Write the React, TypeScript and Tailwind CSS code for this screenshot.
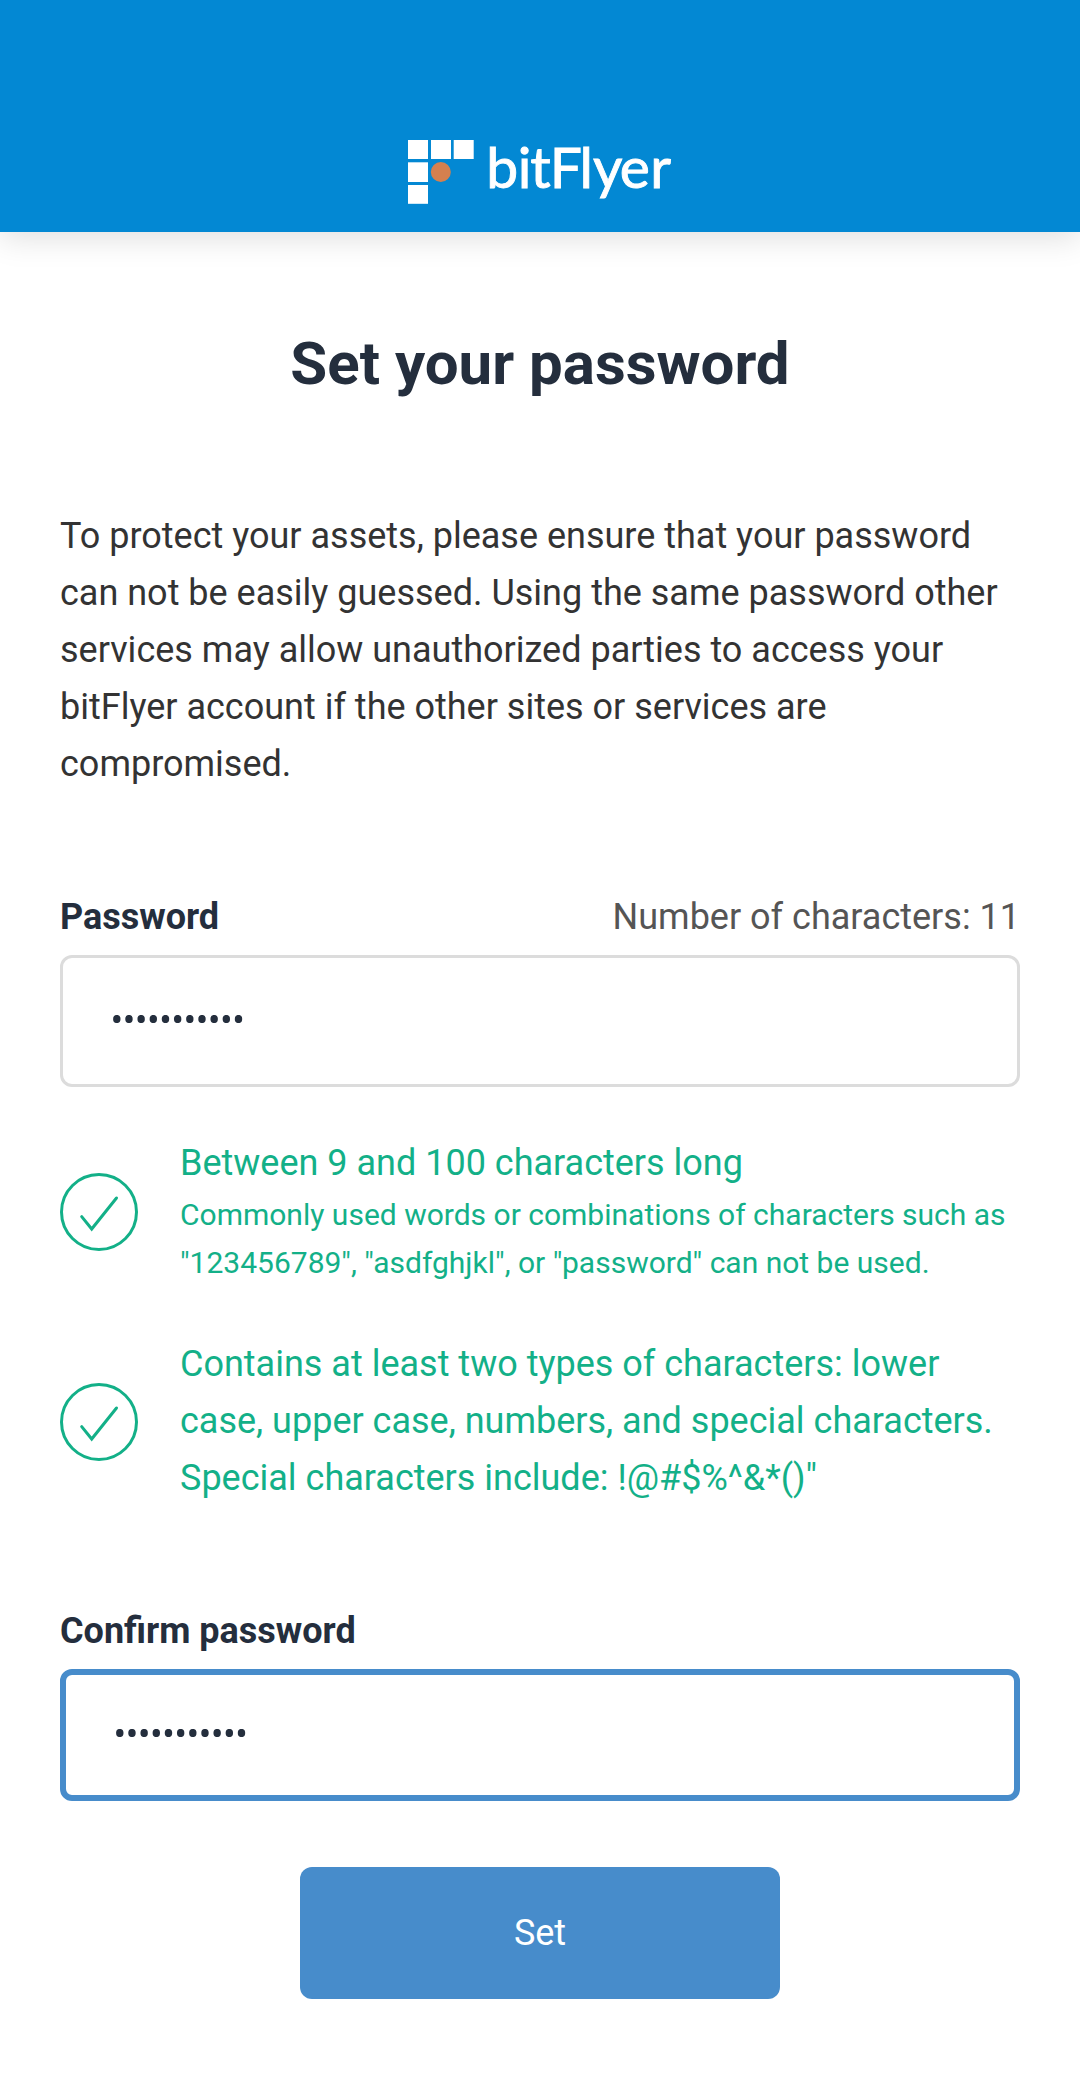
import React from "react";

function Logo() {
  return (
    <svg width="264" height="66" viewBox="0 0 264 66" className="overflow-visible" aria-label="bitFlyer">
      <g fill="#fff">
        <rect x="0" y="0" width="20" height="19" />
        <rect x="23" y="0" width="20" height="19" />
        <rect x="45.7" y="0" width="20" height="19" />
        <rect x="0" y="22.3" width="20" height="19.7" />
        <rect x="0" y="45" width="20" height="18.8" />
      </g>
      <circle cx="32.8" cy="32" r="10" fill="#d5804f" />
      <text
        x="78.2 109.8 122.3 141.8 171.4 185 211.7 242.2"
        y="47.5"
        fontFamily="Lato, sans-serif"
        fontSize="57"
        fill="#fff"
        stroke="#fff"
        strokeWidth="0.9"
      >
        bitFlyer
      </text>
    </svg>
  );
}

function Check({ className }: { className: string }) {
  return (
    <svg width="78" height="78" viewBox="0 0 78 78" fill="none" stroke="#13b088" strokeWidth="3" strokeLinecap="round" className={`shrink-0 ${className}`}>
      <circle cx="39" cy="39" r="37.5" />
      <path d="M21.7 43.6 L31.7 56 L56.5 25" />
    </svg>
  );
}

function Dots() {
  return (
    <svg width="130" height="8" viewBox="0 0 130 8" fill="#242e3d">
      {Array.from({ length: 11 }, (_, i) => (
        <ellipse key={i} cx={3.8 + i * 12.17} cy="4" rx="3.7" ry="4.1" />
      ))}
    </svg>
  );
}

export default function App() {
  return (
    <div className="h-[2076px] w-[1080px] overflow-hidden bg-white font-['Roboto',sans-serif] text-[36px] leading-[57px] text-[#333]">
      <header className="flex h-[232px] justify-center bg-[#0388d3] pt-[140px] shadow-[0_6px_30px_rgba(0,0,0,0.13)]">
        <Logo />
      </header>
      <main className="px-[60px]">
        <h1 className="mt-[96px] text-center text-[60px] leading-[72px] font-bold text-[#242e3d]">Set your password</h1>
        <p className="mt-[108px] whitespace-nowrap">
          To protect your assets, please ensure that your password<br />
          can not be easily guessed. Using the same password other<br />
          services may allow unauthorized parties to access your<br />
          bitFlyer account if the other sites or services are<br />
          compromised.
        </p>
        <div className="mt-[96px] flex justify-between">
          <label className="font-bold text-[#242e3d]">Password</label>
          <span className="text-[#555]">Number of characters: 11</span>
        </div>
        <div className="mt-[9px] h-[132px] rounded-[12px] border-[3px] border-[#dcdcdc] pt-[57px] pl-[50px]">
          <Dots />
        </div>
        <div className="mt-[48px] flex h-[153px] items-start gap-[42px] whitespace-nowrap text-[#13b088]">
          <Check className="mt-[38px]" />
          <div>
            <p>Between 9 and 100 characters long</p>
            <p className="-mt-px text-[30px] leading-[48px]">Commonly used words or combinations of characters such as<br />"123456789", "asdfghjkl", or "password" can not be used.</p>
          </div>
        </div>
        <div className="mt-[48px] flex h-[171px] items-start gap-[42px] whitespace-nowrap text-[#13b088]">
          <Check className="mt-[47px]" />
          <p>Contains at least two types of characters: lower<br />case, upper case, numbers, and special characters.<br />Special characters include: !@#$%^&amp;*()"</p>
        </div>
        <label className="mt-[96px] block font-bold text-[#242e3d]">Confirm password</label>
        <div className="mt-[9px] h-[132px] rounded-[12px] border-[6px] border-[#478ccb] pt-[54px] pl-[50px]">
          <Dots />
        </div>
        <button className="mx-auto mt-[66px] block h-[132px] w-[480px] rounded-[12px] bg-[#478ccb] text-white">Set</button>
      </main>
    </div>
  );
}
